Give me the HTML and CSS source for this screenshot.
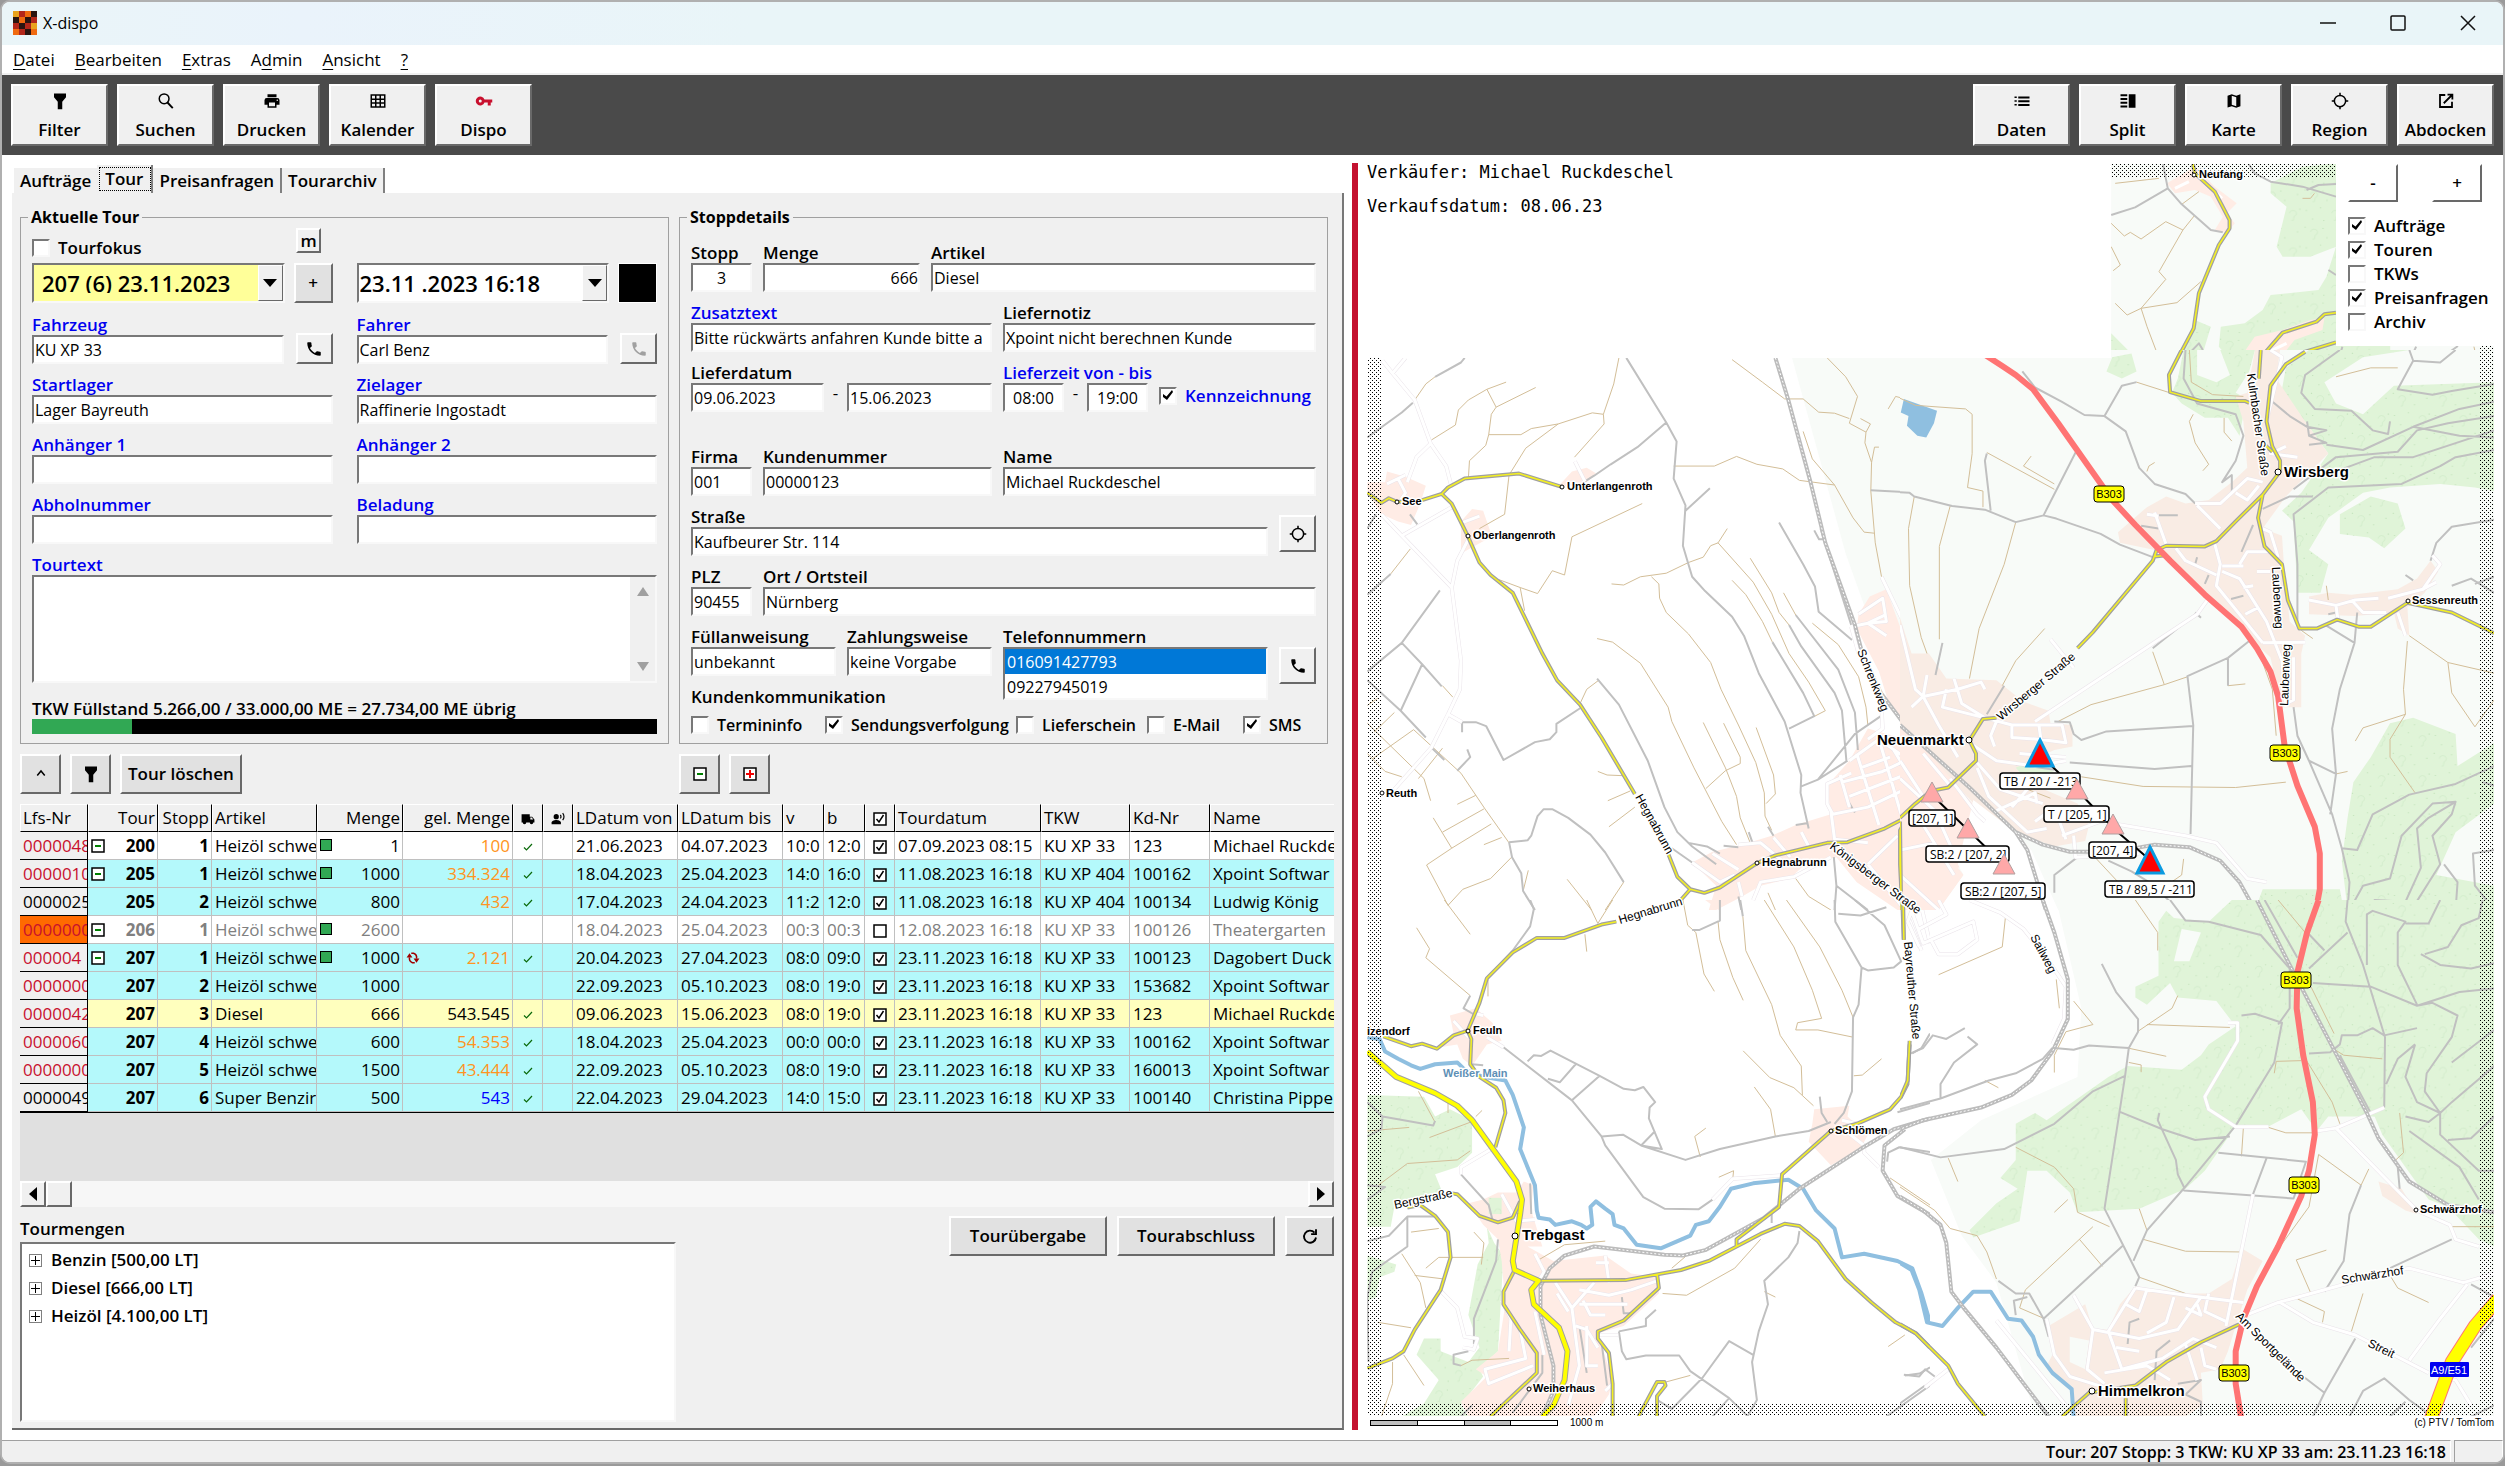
FILE: index.html
```html
<!DOCTYPE html>
<html lang="de">
<head>
  <meta charset="UTF-8" />
  <title>X-dispo</title>
  <meta name="viewport" content="width=device-width, initial-scale=1.0" />
  <link rel="stylesheet" href="styles.css">
</head>
<body>
  <!-- icon set -->
  <svg class="defs" width="0" height="0" aria-hidden="true">
    <symbol id="i-filter" viewBox="0 0 24 24"><path d="M4 2h16v5l-5 6v10H9V13L4 7z"/></symbol>
    <symbol id="i-search" viewBox="0 0 24 24"><g fill="none" stroke="currentColor" stroke-width="2"><circle cx="9.500" cy="9" r="6.500"/><path d="M14 14l7 7.500" stroke-width="2.500"/></g></symbol>
    <symbol id="i-print" viewBox="0 0 24 24"><path d="M18 3H6v4h12zM19 8H5a3 3 0 0 0-3 3v6h4v4h12v-4h4v-6a3 3 0 0 0-3-3zm-3 11H8v-5h8zm3-7a1 1 0 1 1 0-2 1 1 0 0 1 0 2z"/></symbol>
    <symbol id="i-grid" viewBox="0 0 24 24"><path fill="none" stroke="currentColor" stroke-width="2" d="M3 4h18v16H3zM3 9.500h18M3 14.500h18M9 4v16M15 4v16"/></symbol>
    <symbol id="i-key" viewBox="0 0 24 24"><path d="M12.650 10A6 6 0 1 0 12.650 14H17v4h4v-4h2v-4zM7 14a2 2 0 1 1 0-4 2 2 0 0 1 0 4z"/></symbol>
    <symbol id="i-list" viewBox="0 0 24 24"><path d="M2 6h3v2H2zm0 5h3v2H2zm0 5h3v2H2zM7 6h15v2.500H7zm0 5h15v2.500H7zm0 5h15v2.500H7z"/></symbol>
    <symbol id="i-split" viewBox="0 0 24 24"><path d="M13 3h9v18h-9zM2 3h9v2.500H2zm0 5h9v2.500H2zm0 5h9v2.500H2zm0 5h9V20.500H2z"/></symbol>
    <symbol id="i-map" viewBox="0 0 24 24"><path d="M20.500 3l-5.500 2-6-2-5.600 1.900v15.600L9 18.900l6 2.100 5.600-1.900V3zM15 19l-6-2.100V5l6 2.100z"/></symbol>
    <symbol id="i-target" viewBox="0 0 24 24"><g fill="none" stroke="currentColor" stroke-width="2"><circle cx="12" cy="12" r="7.500"/><path d="M12 1v4M12 19v4M1 12h4M19 12h4"/></g></symbol>
    <symbol id="i-open" viewBox="0 0 24 24"><path fill="none" stroke="currentColor" stroke-width="2.400" d="M11 4H4v16h16v-7M14 3.500h6.500V10M20 4L9 15"/></symbol>
    <symbol id="i-phone" viewBox="0 0 24 24"><path d="M6.600 10.800c1.400 2.800 3.800 5.100 6.600 6.600l2.200-2.200c.3-.3.700-.4 1-.2 1.100.4 2.300.6 3.600.6.600 0 1 .4 1 1V20c0 .6-.4 1-1 1C10.600 21 3 13.400 3 4c0-.6.400-1 1-1h3.500c.6 0 1 .4 1 1 0 1.300.2 2.500.6 3.600.1.300 0 .7-.2 1z"/></symbol>
    <symbol id="i-truck" viewBox="0 0 24 24"><path d="M1 4h14v4h4l4 5v5h-2a3 3 0 0 1-6 0H9a3 3 0 0 1-6 0H1zM16 9.500V13h5l-2.500-3.500z"/></symbol>
    <symbol id="i-voice" viewBox="0 0 24 24"><circle cx="9" cy="8" r="4.500"/><path d="M1 21v-3c0-3 5-4.500 8-4.500s8 1.500 8 4.500v3z"/><path fill="none" stroke="currentColor" stroke-width="2" d="M16 5c1.500 2 1.500 4 0 6M20 2c3 4 3 8 0 12"/></symbol>
    <symbol id="i-refresh" viewBox="0 0 24 24"><path fill="none" stroke="currentColor" stroke-width="2.500" d="M18 7.500A8 8 0 1 0 20 14M20 3v6.500h-6.500"/></symbol>
    <symbol id="i-sync" viewBox="0 0 24 24"><path fill="none" stroke="#a00000" stroke-width="2.600" d="M15 20h-4a8 8 0 0 1-5-9M9 4h4a8 8 0 0 1 5 9"/><path fill="#a00000" d="M1 11l5-7 5 7zM23 13l-5 7-5-7z"/></symbol>
    <symbol id="i-up" viewBox="0 0 24 24"><path fill="none" stroke="currentColor" stroke-width="2" d="M7 14l5-6 5 6"/></symbol>
    <symbol id="i-minus" viewBox="0 0 14 14"><path fill="#fff" stroke="#000" stroke-width="1.500" d="M1 1h12v12H1z"/><path fill="#008000" d="M4 6h6v2H4z"/></symbol>
    <symbol id="i-plus" viewBox="0 0 14 14"><path fill="#fff" stroke="#000" stroke-width="1.500" d="M1 1h12v12H1z"/><path fill="#f00000" d="M3 6h3V3h2v3h3v2H8v3H6V8H3z"/></symbol>
    <symbol id="i-box" viewBox="0 0 14 14"><path fill="#fff" stroke="#000" stroke-width="1.500" d="M1 1h12v12H1z"/></symbol>
    <symbol id="i-checked" viewBox="0 0 14 14"><path fill="#fff" stroke="#000" stroke-width="1.500" d="M1 1h12v12H1z"/><path fill="none" stroke="#000" stroke-width="1.500" d="M3.500 7l2.500 3 4.500-7"/></symbol>
    <symbol id="i-tick" viewBox="0 0 14 14"><path fill="none" stroke="#0a6a0a" stroke-width="1.200" d="M3 7.500l2.500 2.500L11 4"/></symbol>
    <symbol id="i-down" viewBox="0 0 14 8"><path d="M0 0h14L7 8z"/></symbol>
  </svg>

  <div class="window">
    <header class="titlebar">
      <svg class="logo" viewBox="0 0 24 24">
        <path fill="#e9a21c" d="M0 0h24v24H0z"/>
        <path fill="#b3261a" d="M6 0h6v6H6zM18 6h6v6h-6zM0 12h6v6H0zM12 12h6v6h-6zM6 18h6v6H6z"/>
        <path fill="#2a1410" d="M18 0h6v6h-6zM0 6h6v6H0zM12 6h6v6h-6zM6 12h6v6H6zM12 18h6v6h-6z"/>
        <path fill="#f06a10" d="M12 0h6v6h-6zM6 6h6v6H6zM18 18h6v6h-6zM0 18h6v6H0z"/>
      </svg>
      <h1>X-dispo</h1>
      <div class="window-buttons">
        <button type="button" aria-label="Minimieren"><svg viewBox="0 0 16 16"><path d="M0 8h16"/></svg></button>
        <button type="button" aria-label="Maximieren"><svg viewBox="0 0 16 16"><rect x="1" y="1" width="14" height="14" rx="1"/></svg></button>
        <button type="button" aria-label="Schließen"><svg viewBox="0 0 16 16"><path d="M1 1l14 14M15 1L1 15"/></svg></button>
      </div>
    </header>

    <nav class="menubar">
      <a href="#"><u>D</u>atei</a>
      <a href="#"><u>B</u>earbeiten</a>
      <a href="#"><u>E</u>xtras</a>
      <a href="#">A<u>d</u>min</a>
      <a href="#"><u>A</u>nsicht</a>
      <a href="#"><u>?</u></a>
    </nav>

    <div class="toolbar">
      <button type="button" class="btn tool"><svg><use href="#i-filter"/></svg>Filter</button>
      <button type="button" class="btn tool"><svg><use href="#i-search"/></svg>Suchen</button>
      <button type="button" class="btn tool"><svg><use href="#i-print"/></svg>Drucken</button>
      <button type="button" class="btn tool"><svg><use href="#i-grid"/></svg>Kalender</button>
      <button type="button" class="btn tool"><svg class="red"><use href="#i-key"/></svg>Dispo</button>
      <span class="spacer"></span>
      <button type="button" class="btn tool"><svg><use href="#i-list"/></svg>Daten</button>
      <button type="button" class="btn tool"><svg><use href="#i-split"/></svg>Split</button>
      <button type="button" class="btn tool"><svg><use href="#i-map"/></svg>Karte</button>
      <button type="button" class="btn tool"><svg><use href="#i-target"/></svg>Region</button>
      <button type="button" class="btn tool"><svg><use href="#i-open"/></svg>Abdocken</button>
    </div>

    <main class="content">
      <section class="data-pane">
        <div class="tabs">
          <button type="button" class="tab">Aufträge</button>
          <button type="button" class="tab active">Tour</button>
          <button type="button" class="tab">Preisanfragen</button>
          <button type="button" class="tab">Tourarchiv</button>
        </div>

        <div class="panel">
          <div class="forms">
            <fieldset class="group">
              <legend>Aktuelle Tour</legend>
              <div class="focus-row">
                <label class="check"><input type="checkbox">Tourfokus</label>
                <button type="button" class="btn btn-m">m</button>
              </div>
              <div class="pair combos">
                <div class="with-button">
                  <div class="combo yellow">
                    <select aria-label="Tour"><option>207 (6) 23.11.2023</option></select>
                    <span class="arrow"><svg><use href="#i-down"/></svg></span>
                  </div>
                  <button type="button" class="btn gray btn-add">+</button>
                </div>
                <div class="with-button">
                  <div class="combo">
                    <select aria-label="Tourdatum"><option>23.11 .2023 16:18</option></select>
                    <span class="arrow"><svg><use href="#i-down"/></svg></span>
                  </div>
                  <button type="button" class="color" aria-label="Farbe"></button>
                </div>
              </div>
              <div class="pair">
                <div class="with-button">
                  <div class="field link"><label for="fahrzeug">Fahrzeug</label><input id="fahrzeug" type="text" value="KU XP 33"></div>
                  <button type="button" class="btn btn-call" aria-label="Fahrzeug anrufen"><svg><use href="#i-phone"/></svg></button>
                </div>
                <div class="with-button">
                  <div class="field link"><label for="fahrer">Fahrer</label><input id="fahrer" type="text" value="Carl Benz"></div>
                  <button type="button" class="btn btn-call off" aria-label="Fahrer anrufen"><svg><use href="#i-phone"/></svg></button>
                </div>
              </div>
              <div class="pair">
                <div class="field link"><label for="start">Startlager</label><input id="start" type="text" value="Lager Bayreuth"></div>
                <div class="field link"><label for="ziel">Zielager</label><input id="ziel" type="text" value="Raffinerie Ingostadt"></div>
              </div>
              <div class="pair">
                <div class="field link"><label for="anh1">Anhänger 1</label><input id="anh1" type="text"></div>
                <div class="field link"><label for="anh2">Anhänger 2</label><input id="anh2" type="text"></div>
              </div>
              <div class="pair">
                <div class="field link"><label for="abhol">Abholnummer</label><input id="abhol" type="text"></div>
                <div class="field link"><label for="beladung">Beladung</label><input id="beladung" type="text"></div>
              </div>
              <div class="field link tourtext">
                <label for="tourtext">Tourtext</label>
                <textarea id="tourtext"></textarea>
                <span class="vscroll"><svg viewBox="0 0 12 9"><path d="M6 0l6 9H0z"/></svg><svg viewBox="0 0 12 9"><path d="M0 0h12L6 9z"/></svg></span>
              </div>
              <div class="fill-text">TKW Füllstand 5.266,00 / 33.000,00 ME = 27.734,00 ME übrig</div>
              <div class="fill-bar"><span style="width: 16%"></span></div>
            </fieldset>

            <fieldset class="group stopp">
              <legend>Stoppdetails</legend>
              <div class="row row-artikel">
                <div class="field"><label for="stopp">Stopp</label><input id="stopp" class="center" type="text" value="3"></div>
                <div class="field"><label for="menge">Menge</label><input id="menge" class="right" type="text" value="666"></div>
                <div class="field"><label for="artikel">Artikel</label><input id="artikel" type="text" value="Diesel"></div>
              </div>
              <div class="row row-half">
                <div class="field link"><label for="zusatz">Zusatztext</label><input id="zusatz" type="text" value="Bitte rückwärts anfahren Kunde bitte a"></div>
                <div class="field"><label for="notiz">Liefernotiz</label><input id="notiz" type="text" value="Xpoint nicht berechnen Kunde"></div>
              </div>
              <div class="row row-half row-dates">
                <div class="field">
                  <label for="ldvon">Lieferdatum</label>
                  <div class="range range-date"><input id="ldvon" type="text" value="09.06.2023"><span>-</span><input type="text" aria-label="Lieferdatum bis" value="15.06.2023"></div>
                </div>
                <div class="field link">
                  <label for="lzvon">Lieferzeit von - bis</label>
                  <div class="range range-time"><input id="lzvon" class="center" type="text" value="08:00"><span>-</span><input class="center" type="text" aria-label="Lieferzeit bis" value="19:00"><label class="check"><input type="checkbox" checked>Kennzeichnung</label></div>
                </div>
              </div>
              <div class="row row-kunde">
                <div class="field"><label for="firma">Firma</label><input id="firma" type="text" value="001"></div>
                <div class="field"><label for="kdnr">Kundenummer</label><input id="kdnr" type="text" value="00000123"></div>
                <div class="field"><label for="name">Name</label><input id="name" type="text" value="Michael Ruckdeschel"></div>
              </div>
              <div class="row row-strasse">
                <div class="field"><label for="strasse">Straße</label><input id="strasse" type="text" value="Kaufbeurer Str. 114"></div>
                <button type="button" class="btn btn-side" aria-label="Position"><svg><use href="#i-target"/></svg></button>
              </div>
              <div class="row row-ort">
                <div class="field"><label for="plz">PLZ</label><input id="plz" type="text" value="90455"></div>
                <div class="field"><label for="ort">Ort / Ortsteil</label><input id="ort" type="text" value="Nürnberg"></div>
              </div>
              <div class="row row-tel">
                <div class="tel-left">
                  <div class="row row-equal">
                    <div class="field"><label for="fuell">Füllanweisung</label><input id="fuell" type="text" value="unbekannt"></div>
                    <div class="field"><label for="zahl">Zahlungsweise</label><input id="zahl" type="text" value="keine Vorgabe"></div>
                  </div>
                  <div class="caption">Kundenkommunikation</div>
                </div>
                <div class="field"><label for="tel">Telefonnummern</label>
                  <select id="tel" class="listbox" size="2"><option selected>016091427793</option><option>09227945019</option></select>
                </div>
                <button type="button" class="btn btn-side low" aria-label="Anrufen"><svg><use href="#i-phone"/></svg></button>
              </div>
              <div class="comm">
                <label class="check"><input type="checkbox">Termininfo</label>
                <label class="check"><input type="checkbox" checked>Sendungsverfolgung</label>
                <label class="check"><input type="checkbox">Lieferschein</label>
                <label class="check"><input type="checkbox">E-Mail</label>
                <label class="check"><input type="checkbox" checked>SMS</label>
              </div>
            </fieldset>
          </div>

          <div class="forms actions">
            <div>
              <button type="button" class="btn gray square" aria-label="Einklappen"><svg><use href="#i-up"/></svg></button>
              <button type="button" class="btn gray square" aria-label="Filter"><svg><use href="#i-filter"/></svg></button>
              <button type="button" class="btn gray">Tour löschen</button>
            </div>
            <div>
              <button type="button" class="btn gray square" aria-label="Alle schließen"><svg class="small"><use href="#i-minus"/></svg></button>
              <button type="button" class="btn gray square" aria-label="Alle öffnen"><svg class="small"><use href="#i-plus"/></svg></button>
            </div>
          </div>

          <div class="table-area">
            <table class="stops">
              <colgroup><col class="c68"><col class="c70"><col class="c54"><col class="c105"><col class="c86"><col class="c110"><col class="c30"><col class="c30"><col class="c105"><col class="c105"><col class="c41"><col class="c41"><col class="c30"><col class="c146"><col class="c89"><col class="c80"><col></colgroup>
              <thead>
                <tr><th>Lfs-Nr</th><th class="r">Tour</th><th class="r">Stopp</th><th>Artikel</th><th class="r">Menge</th><th class="r">gel. Menge</th><th class="c"><svg><use href="#i-truck"/></svg></th><th class="c"><svg><use href="#i-voice"/></svg></th><th>LDatum von</th><th>LDatum bis</th><th>v</th><th>b</th><th class="c"><svg><use href="#i-checked"/></svg></th><th>Tourdatum</th><th>TKW</th><th>Kd-Nr</th><th>Name</th></tr>
              </thead>
              <tbody>
                <tr><th class="crimson">0000048</th><td class="tour"><svg><use href="#i-minus"/></svg>200</td><td class="tour">1</td><td>Heizöl schwe</td><td class="r"><i></i>1</td><td class="r orange">100</td><td class="c"><svg><use href="#i-tick"/></svg></td><td></td><td>21.06.2023</td><td>04.07.2023</td><td>10:0</td><td>12:0</td><td class="c"><svg><use href="#i-checked"/></svg></td><td>07.09.2023 08:15</td><td>KU XP 33</td><td>123</td><td>Michael Ruckde</td></tr>
                <tr class="cyan"><th class="crimson">0000010</th><td class="tour"><svg><use href="#i-minus"/></svg>205</td><td class="tour">1</td><td>Heizöl schwe</td><td class="r"><i></i>1000</td><td class="r orange">334.324</td><td class="c"><svg><use href="#i-tick"/></svg></td><td></td><td>18.04.2023</td><td>25.04.2023</td><td>14:0</td><td>16:0</td><td class="c"><svg><use href="#i-checked"/></svg></td><td>11.08.2023 16:18</td><td>KU XP 404</td><td>100162</td><td>Xpoint Softwar</td></tr>
                <tr class="cyan"><th>0000025</th><td class="tour">205</td><td class="tour">2</td><td>Heizöl schwe</td><td class="r">800</td><td class="r orange">432</td><td class="c"><svg><use href="#i-tick"/></svg></td><td></td><td>17.04.2023</td><td>24.04.2023</td><td>11:2</td><td>12:0</td><td class="c"><svg><use href="#i-checked"/></svg></td><td>11.08.2023 16:18</td><td>KU XP 404</td><td>100134</td><td>Ludwig König</td></tr>
                <tr class="dim"><th class="crimson alert">0000000</th><td class="tour"><svg><use href="#i-minus"/></svg>206</td><td class="tour">1</td><td>Heizöl schwe</td><td class="r"><i></i>2600</td><td></td><td></td><td></td><td>18.04.2023</td><td>25.04.2023</td><td>00:3</td><td>00:3</td><td class="c"><svg><use href="#i-box"/></svg></td><td>12.08.2023 16:18</td><td>KU XP 33</td><td>100126</td><td>Theatergarten</td></tr>
                <tr class="cyan"><th class="crimson">000004</th><td class="tour"><svg><use href="#i-minus"/></svg>207</td><td class="tour">1</td><td>Heizöl schwe</td><td class="r"><i></i>1000</td><td class="r orange"><svg class="sync"><use href="#i-sync"/></svg>2.121</td><td class="c"><svg><use href="#i-tick"/></svg></td><td></td><td>20.04.2023</td><td>27.04.2023</td><td>08:0</td><td>09:0</td><td class="c"><svg><use href="#i-checked"/></svg></td><td>23.11.2023 16:18</td><td>KU XP 33</td><td>100123</td><td>Dagobert Duck</td></tr>
                <tr class="cyan"><th class="crimson">0000000</th><td class="tour">207</td><td class="tour">2</td><td>Heizöl schwe</td><td class="r">1000</td><td></td><td></td><td></td><td>22.09.2023</td><td>05.10.2023</td><td>08:0</td><td>19:0</td><td class="c"><svg><use href="#i-checked"/></svg></td><td>23.11.2023 16:18</td><td>KU XP 33</td><td>153682</td><td>Xpoint Softwar</td></tr>
                <tr class="current"><th class="crimson">0000042</th><td class="tour">207</td><td class="tour">3</td><td>Diesel</td><td class="r">666</td><td class="r">543.545</td><td class="c"><svg><use href="#i-tick"/></svg></td><td></td><td>09.06.2023</td><td>15.06.2023</td><td>08:0</td><td>19:0</td><td class="c"><svg><use href="#i-checked"/></svg></td><td>23.11.2023 16:18</td><td>KU XP 33</td><td>123</td><td>Michael Ruckde</td></tr>
                <tr class="cyan"><th class="crimson">0000060</th><td class="tour">207</td><td class="tour">4</td><td>Heizöl schwe</td><td class="r">600</td><td class="r orange">54.353</td><td class="c"><svg><use href="#i-tick"/></svg></td><td></td><td>18.04.2023</td><td>25.04.2023</td><td>00:0</td><td>00:0</td><td class="c"><svg><use href="#i-checked"/></svg></td><td>23.11.2023 16:18</td><td>KU XP 33</td><td>100162</td><td>Xpoint Softwar</td></tr>
                <tr class="cyan"><th class="crimson">0000000</th><td class="tour">207</td><td class="tour">5</td><td>Heizöl schwe</td><td class="r">1500</td><td class="r orange">43.444</td><td class="c"><svg><use href="#i-tick"/></svg></td><td></td><td>22.09.2023</td><td>05.10.2023</td><td>08:0</td><td>19:0</td><td class="c"><svg><use href="#i-checked"/></svg></td><td>23.11.2023 16:18</td><td>KU XP 33</td><td>160013</td><td>Xpoint Softwar</td></tr>
                <tr class="cyan"><th>0000049</th><td class="tour">207</td><td class="tour">6</td><td>Super Benzir</td><td class="r">500</td><td class="r blue">543</td><td class="c"><svg><use href="#i-tick"/></svg></td><td></td><td>22.04.2023</td><td>29.04.2023</td><td>14:0</td><td>15:0</td><td class="c"><svg><use href="#i-checked"/></svg></td><td>23.11.2023 16:18</td><td>KU XP 33</td><td>100140</td><td>Christina Pippe</td></tr>
              </tbody>
            </table>
          </div>
          <div class="hscroll">
            <button type="button" class="btn" aria-label="Links"><svg viewBox="0 0 8 14"><path d="M8 0v14L0 7z"/></svg></button>
            <span class="btn thumb"></span>
            <span class="spacer"></span>
            <button type="button" class="btn" aria-label="Rechts"><svg viewBox="0 0 8 14"><path d="M0 0v14l8-7z"/></svg></button>
          </div>

          <div class="bottom">
            <div class="amounts">
              <div class="caption">Tourmengen</div>
              <ul class="tree">
                <li><span class="node"></span>Benzin [500,00 LT]</li>
                <li><span class="node"></span>Diesel [666,00 LT]</li>
                <li><span class="node"></span>Heizöl [4.100,00 LT]</li>
              </ul>
            </div>
            <div class="bottom-buttons">
              <button type="button" class="btn gray wide">Tourübergabe</button>
              <button type="button" class="btn gray wide">Tourabschluss</button>
              <button type="button" class="btn gray reload" aria-label="Aktualisieren"><svg><use href="#i-refresh"/></svg></button>
            </div>
          </div>
        </div>
      </section>

      <div class="splitter"></div>

      <section class="map-pane">
        <div class="map">
          <svg class="map-svg" viewBox="1367 164 1127 1252" preserveAspectRatio="xMinYMin slice">
            <defs>
              <pattern id="trees" width="106" height="112" patternUnits="userSpaceOnUse">
                <path class="tree-ground" d="M0 0h106v112H0z"/>
                <path class="tree-mark" d="M20 24a9 9 0 1 1 12 9l-2 12h-5M73 80a9 9 0 1 1 12 9l-2 12h-5"/>
                <path class="tree-dot" d="M5 8h3v3H5zM50 12h3v3h-3zM60 40h3v3h-3zM92 22h3v3h-3zM8 70h3v3H8zM44 62h3v3h-3zM24 96h3v3h-3zM98 66h3v3h-3zM52 100h3v3h-3z"/>
              </pattern>
              <pattern id="dots" width="4" height="4" patternUnits="userSpaceOnUse"><path d="M0 0h1v1H0zM2 2h1v1H2z"/></pattern>

              <path id="res-nw" d="M88,30L115,65 175,140 218,262 260,325 275,385M115,65L150,22M218,262L180,300 155,370M85,460L140,520 275,665M140,520L275,440M320,530L290,590 275,665 300,870 297,950 265,1020 220,1113 120,1230M265,1020L303,1042M608,312L635,368M130,360L150,400 130,430M100,375L150,350M300,485L350,465M925,1435L1000,1490 1040,1470M980,1410L1050,1455M1050,1385L1110,1380 1180,1440M1145,1365L1190,1420M1220,1350L1240,1390M1090,1540L1110,1490 1200,1475 1300,1420M1060,1530L1050,1490M1350,1150L1430,1090 1568,1190M1355,1185L1290,1215 1290,1270 1305,1300 1400,1280 1500,1230M1370,1130L1430,1330M1430,1090L1490,1300M1330,1210L1440,1180 1540,1130M1350,1250L1500,1190M1300,1290L1310,1370 1400,1380M1437,635L1500,770 1520,850M1355,775L1400,765 1450,740M1375,740L1440,695 1450,760 1400,765 1450,800M1520,850L1510,900 1568,990M1400,1440L1500,1568M1480,1360L1400,1440M1355,775L1375,850M1435,960L1440,1060 1400,1090M1325,1190L1350,1280M1470,1120L1540,1240M1380,1170L1460,1140"/>
              <path id="sec-nw" d="M47,400L85,428 105,415 127,425 180,425 248,403 265,385 310,360 457,346 572,383M248,403L275,430 318,520 350,595 380,630 440,680 520,850 560,925 622,993 680,1085 770,1243M860,1410L885,1475 920,1510 958,1520 1000,1505 1100,1437 1150,1415 1290,1380 1345,1378 1445,1340 1510,1305 1550,1250 1568,1240M920,1510L890,1545M1510,1305L1487,1345 1487,1440 1493,1568"/>
              <path id="rail-nw" d="M1150,22L1185,140 1245,370 1285,540 1365,770 1385,850 1435,960 1500,1050 1568,1120"/>

              <path id="res-ne" d="M660,455L675,500 690,545M640,460L670,465M715,555L740,590 820,630M815,540L830,600 820,660 940,820M835,620L880,640 950,760 990,870 1000,1000M765,430L830,430 900,360 940,370M770,435L830,500M880,600L900,565 960,565M835,605L890,605M925,620L960,620M940,820L1050,818M930,720L895,740M890,665L915,660M1020,860L1020,980 1000,990M940,500L960,510 980,580M960,0L990,20 950,200M1000,270L960,290 1030,300M930,380L900,420 870,400M1060,700L1130,715 1180,700 1240,695M1130,715L1135,755M1170,700L1200,735 1260,735M1380,575L1400,600 1355,670 1265,695M1355,670L1390,650M1290,735L1310,800M800,695L770,740 350,1040M390,810L450,890M0,770L40,950 60,970 150,950 210,930 220,950M60,970L100,1050 150,1140M70,910L60,970 30,1000M120,950L110,1000 220,1030 290,1050 420,1050 430,1100 360,1090 290,1085 290,1050M360,1050L365,1090M250,1040L235,1080 245,1110M140,920L160,990 220,1030M180,1100L250,1150 350,1165 430,1150M310,1130L430,1140M195,1150L260,1230 370,1270M250,1290L350,1240 355,1270M200,1170L230,1250 330,1350 380,1340M290,1280L330,1230M350,1320L400,1280 430,1370M420,1360L520,1320 740,1360 820,1380 900,1480 950,1490M450,1360L455,1420 620,1410M0,1150L60,1250M0,1200L90,1290 140,1410M60,1330L140,1470M0,1400L90,1380M0,1470L100,1568M130,1200L200,1300 220,1320M60,1130L130,1220"/>
              <path id="sec-ne" d="M0,1310L40,1270 80,1235 125,1225 197,1150 197,1130 180,1093 215,1033 250,1030M460,835L500,790 655,590 665,560 690,548 790,550 820,535 870,480 940,405 985,340 985,310 965,270 950,200 960,100 1000,40 1050,5M965,285L940,260M730,0L697,70 700,118 780,143 895,143 905,148M940,405L928,470 945,550 990,600 1005,700 1035,780 1080,780 1133,755 1190,775 1220,775 1315,708 1430,735 1540,793M935,0L930,80M0,1320L3,1568M665,560L660,578 690,575"/>
              <path id="rail-ne" d="M0,1050L180,1225 300,1350 370,1385 440,1405 560,1405 660,1385 750,1392 830,1430 880,1490 920,1568M300,1350L330,1400 350,1470 378,1568"/>

              <path id="res-sw" d="M370,380L415,408M280,335L320,380M340,315L360,320M390,685L300,740 300,760M245,1083L290,1130 310,1210 345,1215 335,1245 305,1240M980,830L1035,772 1168,763M1370,620L1330,610M1340,640L1390,680 1390,700 1430,740M410,815L450,890 500,885M500,980L525,1030 510,1055M410,1110L435,1160 430,1250M500,1140L525,1260M460,1190L475,1270 365,1300 375,1340 495,1290M555,1060L600,1130 620,1290 590,1400M560,1090L590,1140M600,1130L660,1060M620,1080L700,1095 760,1080 830,1055M620,1120L750,1120M630,1110L650,1150 690,1150M640,1180L640,1290 670,1290M690,985L700,1060M665,1005L700,1005M610,1180L640,1190 670,1240M670,1205L725,1205M690,1360L710,1340M1510,50L1545,140M1545,20L1568,120"/>
              <path id="sec-sw" d="M720,60L680,68 580,105 505,105 440,145 370,217 350,285 318,362 280,375 235,412 195,398 165,405 90,378M318,362L328,385 325,455 350,490 395,520 415,555 420,590 393,685M155,852L190,845 230,875 265,920 272,990 245,1080 175,1190 145,1250 115,1270 47,1297M270,812L290,815 350,875 400,893 440,880 460,835M445,1025L415,1085 415,1120 460,1190 505,1255 505,1310 380,1431M510,1055L745,1053 895,1025 970,1000 1045,960 1110,925 1175,897 1215,903 1265,945 1340,1050 1410,1115 1475,1170 1530,1200 1568,1240M1045,960L1045,940 1160,850 1168,760 1300,640 1370,620 1460,580 1490,545 1507,510 1513,400M1493,0L1497,110M830,1035L835,1075 740,1165 670,1195 670,1215 700,1255 710,1340 710,1431M780,1431L830,1335 850,1335 853,1345 830,1375 830,1431"/>
              <path id="rail-sw" d="M1568,605L1470,635 1380,690 1215,800 1120,880 960,970 900,985 850,983 660,960 580,985 540,1020 515,1070 515,1150 550,1290 550,1360 520,1431M1500,635L1445,680 1440,750 1480,820 1568,872"/>
              <path id="main-sw" d="M47,420L125,490 230,535 290,570 330,610 450,780 465,830 460,870 440,1000 445,1025 510,1055 490,1080 497,1120 565,1185 588,1250 580,1330 550,1400 520,1431"/>

              <path id="res-se" d="M180,0L260,35 320,80 380,160 430,240 425,330 395,400M30,30L60,120 190,60 200,110 150,150 100,150 80,110M40,0L20,60 50,130M100,0L120,40 50,80M850,340L875,340 875,390 790,545 800,580 870,628 955,628M1080,640L1130,632 1255,575M1130,632L1340,860 1425,900 1440,940 1500,960M915,815L845,1180M885,1155L980,1115 1270,1030 1320,1020 1460,1060 1540,1035M985,1115L1070,1170 1180,1205 1370,1310M1470,1065L1400,1160 1320,1275M1400,1320L1440,1330 1480,1400M450,1095L500,1190 485,1300 530,1340M610,1075L540,1195 575,1300M610,1075L740,1095 890,1115M500,1190L620,1215 720,1190 780,1100M710,1100L690,1170 640,1200M640,1080L620,1140 585,1120M575,1300L680,1270 760,1215 820,1240M560,1240L620,1250M530,1310L640,1290 700,1330M740,1230L770,1330M780,1240L790,1290 820,1300M380,1160L400,1260 440,1320 530,1350M250,1165L430,1400M740,1130L780,1150 770,1120M800,1090L790,1140 850,1170M125,1300L65,1350"/>
              <path id="sec-se" d="M8,0L10,110M25,390L20,500 0,550M0,1175L40,1200 125,1290 150,1340 220,1431M420,1431L490,1365 610,1345 690,1280 780,1225 880,1175M585,1380L585,1431"/>
              <path id="rail-se" d="M370,0L400,90 435,220 435,330 395,420 340,500 290,540 210,575 60,610 0,635M0,822L60,860 105,900 120,950 133,1085 165,1130 250,1240 385,1431M925,0L1010,180 1210,590 1240,660 1320,780 1420,845 1540,865"/>
              <path id="a9" d="M1550,1105L1490,1180 1430,1280 1375,1440"/>
              <path id="sec-n" d="M785,492L790,520 840,575 877,660 877,685 850,735 800,880 787,985 745,1080M950,1080L1010,998 1095,965 1115,943 1144,938M1020,1080L1040,1065 1144,1027"/>
            </defs>

            <!-- north west -->
            <svg x="1350" y="350" width="580" height="560" viewBox="0 0 1568 1568" preserveAspectRatio="none">
              <path class="land" d="M1195,22L1568,22 1568,850 1520,850 1390,715 1340,570z"/>
              <path class="town" d="M47,370L95,370 100,340 150,355 205,380 190,430 165,490 130,480 85,460 47,400zM300,480L330,445 360,450 380,510 370,530 300,570zM560,385L600,340 640,330 665,345 640,370zM925,1435L980,1405 1060,1385 1140,1360 1205,1330 1300,1300 1290,1220 1350,1150 1400,1060 1500,1090 1568,1130 1568,1568 1480,1568 1370,1490 1315,1420 1230,1440 1190,1480 1110,1500 1060,1530 990,1568 970,1568 990,1500zM1405,690L1450,670 1510,840 1560,850 1568,900 1568,1120 1460,1000 1430,900 1370,780 1375,740z"/>
              <path class="water" d="M1498,137L1568,155 1568,235 1555,245 1530,238 1505,210 1510,185 1488,175z"/>
              <path class="track" d="M175,140L205,95 230,75M220,252L285,210 293,168 320,140 370,110 422,90M370,110L395,160 502,105M395,160L382,180 375,237 462,237 490,220 563,207 655,176 685,180 713,95 727,22M375,237L367,267 323,310 320,360M563,207L475,275 430,350 418,460 350,500M685,180L687,207 607,300M875,325L985,325 1045,298 1100,320 1170,333 1215,365 1310,378M1033,27L1115,90 1175,137 1225,137 1267,174 1310,177 1350,192M1290,22L1340,75 1372,130 1350,205 1395,230 1392,260 1410,315 1408,395 1420,540 1437,635M1225,228L1250,305 1310,378 1360,470 1390,510 1418,513M1455,165L1475,130 1568,155M1430,272L1418,272 1410,315M1380,192L1407,207 1395,230M1525,410L1508,500 1515,660 1545,770 1560,850M790,430L600,523 580,630 547,618 507,682 460,665 400,642M460,665L472,730M707,655L740,658 785,635 855,625 915,595 955,580 975,548 995,540 1020,500M995,540L1090,650 1140,740 1187,850 1240,930 1285,1010 1257,1025M1082,583L1140,680 1160,735 1187,770M1033,645L1070,685 1115,760 1142,818M1172,680L1205,742M1250,765L1320,825 1375,915 1395,1000 1400,1050M815,635L835,655 837,695 855,735 915,795 975,875 1003,950 1050,1050 1097,1155 1120,1240 1122,1305 1140,1345M668,808L710,818 785,877 860,1000 870,1040 930,1170 1005,1320 1045,1385M955,1043L1015,1170 1045,1250 1055,1310 1082,1380M1010,1045L1055,1140 1055,1158 1015,1178 962,1228M1098,1057L1145,1190 1150,1243 1125,1270M163,557L110,627M622,990L640,950 672,925M172,1063L300,1185 365,1285 430,1380M172,1063L60,1145M47,1045L200,1200 218,1262M120,1015L65,1070M290,1272L340,1247M250,1350L362,1285M225,1310L275,1395 382,1327M275,1395L207,1442 265,1555 305,1510 380,1480 437,1420M362,1385L410,1365M670,1180L695,1190 740,1192M697,1262L757,1235M700,1335L770,1280M587,1482L653,1568M740,1490L690,1568M250,940L278,972M482,1457L468,1515M47,995L75,975M250,1115L185,1200M47,1130L95,1180 140,1195M1205,1480L1240,1530 1300,1568M1130,1520L1150,1568"/>
              <path class="road" d="M47,245L140,175 170,148M230,75L300,35 310,22M747,22L855,203 883,256 875,360 907,435 900,548 925,635 960,675 1033,747 1065,800 1105,905 1175,1040 1220,1190 1218,1240 1240,1340M855,203L777,272 705,320 660,352 635,368M907,450L973,387M1160,483L1225,600 1257,662 1267,733 1357,812M1187,770L1220,830 1310,960 1330,1010 1342,1150M1205,742L1320,895 1365,1015 1373,1120M1142,818L1225,960 1255,1025 1187,1060M668,920L727,993 805,1150 850,1280 885,1350 925,1390 990,1440M622,1003L558,1047 558,1070 540,1090 500,1098 415,1148 368,1053 340,1042 303,1042 303,1070M430,1378L480,1373 490,1360 507,1305 523,1286 548,1286 590,1310 650,1357 690,1407 740,1490M430,1378L438,1420 463,1465 468,1515 500,1568M243,673L140,820 47,900M140,820L195,880 248,942M195,880L137,1010M47,925L137,1010 205,1085M220,1113L255,1148M290,1178L325,1140 317,1118M47,685L110,627M1220,1222L1265,1203 1365,1075 1435,1025M1265,1203L1345,1150M47,500L70,460M162,460L182,488M1308,1420L1315,1500 1310,1568M1315,1500L1400,1568M1408,393L1510,398 1525,410 1568,420M1255,505L1268,530 1282,530M1272,500L1355,770M1130,1335L1145,1360M1205,1330L1235,1325M1078,1350L1090,1385M915,1380L965,1390 1000,1410M1010,1388L1050,1392M870,1395L925,1435M1345,1260L1365,1295M1050,1530L1058,1568"/>
              <use href="#res-nw" class="res-case"/><use href="#res-nw" class="res-fill"/>
              <use href="#rail-nw" class="rail-case"/><use href="#rail-nw" class="rail-fill"/>
              <use href="#sec-nw" class="sec-case"/><use href="#sec-nw" class="sec-fill"/>
            </svg>

            <!-- south west -->
            <svg x="1350" y="900" width="580" height="566" viewBox="0 0 1568 1568" preserveAspectRatio="none">
              <path class="forest" d="M47,540L200,545 230,600 270,580 330,610 330,700 290,740 230,760 250,810 120,850 110,905 47,905zM47,985L125,1010 120,1030 80,1045 70,1100 47,1110zM370,905L390,950 415,985 400,1250 350,1300 360,1320 300,1400 320,1431 140,1431 200,1395 240,1330 180,1260 200,1215 245,1215 245,1250 320,1280 350,1240 320,1150 345,1010 375,950z"/>
              <path class="town" d="M270,320L340,300 385,340 410,390 370,400 350,430 330,460 305,440 290,400 230,410 280,370zM320,840L360,830 400,810 450,810 470,780 495,790 490,860 520,960 480,960 550,1000 690,985 760,1035 835,1045 835,1090 740,1180 670,1200 710,1330 700,1370 660,1431 320,1431 300,1390 370,1320 340,1300 400,1250 420,1120 410,1000 400,940 360,900zM1255,580L1350,570 1345,600 1400,650 1380,690 1300,735 1240,670 1250,620zM960,0L1000,0 1000,30z"/>
              <path class="forest" d="M375,825L410,825 410,870 375,870z"/>
              <path class="river" d="M47,380L80,385 95,420 130,440 165,458 190,468 230,455 290,450 310,470 360,490 420,500 440,540 470,630 460,690 500,790 505,860 510,880 540,885 555,900 600,890 625,900 640,910 655,900 650,850 665,835 690,855 710,870 715,900 740,910 775,955 840,965 920,930 935,900 970,890 1000,850 1030,800 1090,785 1185,775 1225,800 1260,860 1310,910 1330,990 1390,980 1480,1000 1520,1020 1545,1090 1568,1170"/>
              <path class="track" d="M640,0L670,65 710,0M635,95L640,143M255,0L325,95M180,77L215,135 205,160 325,265M373,217L373,267M900,0L913,70 935,90 957,205 985,253M995,60L1000,110 1035,215 1063,278M1062,45L1070,140 1140,290 1163,375 1220,460 1223,540M1120,0L1200,130 1250,250 1275,328 1210,340 1205,360 1265,360 1360,380M1180,0L1270,130 1330,250 1360,325M1063,418L1135,492 1200,520 1253,570M1093,518L1137,580 1150,655M1362,487L1385,485 1437,440M962,632L932,655 947,712M997,768L1037,750 1035,770M185,530L228,612M265,590L265,560M357,583L340,600M215,658L340,610M77,790L155,730 290,720 325,695M140,980L190,1060 205,1130M165,920L240,910M175,1040L255,1050M205,1020L240,990 360,990M335,920L362,950 355,1010M505,1000L580,955 690,945M870,1020L910,985M1110,940L1040,1020 910,1095 845,1090M1120,1085L1150,1100M85,1431L115,1340 115,1280M145,1260L200,1345M75,1170L165,1185M855,1335L920,1317M1455,1237L1500,1205M300,1290L330,1275 430,1270M1568,845L1460,770M47,640L160,630"/>
              <path class="road" d="M487,0L497,25 487,73 440,140 370,217M325,265L307,300 340,320M415,408L600,555 680,655 690,680 793,823 850,855 942,857 980,830M480,447L497,430 517,432 542,417 675,487 740,523 770,527 793,518 825,560 810,575 808,605 843,690 787,680M610,455L567,505 535,495M675,487L600,555M680,655L738,650 787,680 907,720 1000,690 1150,655 1240,640 1300,615M787,680L825,640M1310,0L1312,60 1383,187 1375,290 1360,325 1357,530 1335,590 1310,620M1383,187L1400,195 1470,187 1490,170 1445,70 1365,0M1320,38L1380,43 1450,20M925,83L945,83 1000,57 1000,0M1055,0L1062,45M1270,545L1275,590 1290,615M1480,588L1568,562M1568,370L1545,410 1520,425M1452,725L1455,700 1485,685 1568,698M300,760L375,845 385,885M47,560L88,600 225,625 230,612M88,600L85,635 47,655M47,830L95,795 47,790M235,877L155,877 105,930 47,945M155,877L155,960 60,1030 47,1100 50,1280M400,940L395,1000 335,1160 335,1230M320,1250L280,1260 280,1285 300,1290M1215,917L1210,950 1185,990 1120,1055 1130,1120 1105,1195 1087,1280 1100,1385 1075,1430M727,1195L800,1180 800,1160 827,1135M727,1195L735,1250 747,1272 800,1262 890,1262 920,1305 1025,1380 1075,1430M952,1325L1025,1222 1090,1260M952,1325L870,1410 830,1385M1025,1380L980,1431M620,1180L640,1310M680,1225L695,1345M735,1100L740,1145 760,1145M487,785L490,870M1500,1317L1540,1312 1568,1295M1568,1345L1450,1431M520,1260L520,1310 440,1420M1140,870L1140,895M300,1431L330,1400M330,455L360,458"/>
              <use href="#res-sw" class="res-case"/><use href="#res-sw" class="res-fill"/>
              <use href="#rail-sw" class="rail-case"/><use href="#rail-sw" class="rail-fill"/>
              <use href="#sec-sw" class="sec-case"/><use href="#sec-sw" class="sec-fill"/>
              <use href="#main-sw" class="main-case"/><use href="#main-sw" class="main-fill"/>
            </svg>

            <!-- north -->
            <svg x="1880" y="0" width="625" height="360" viewBox="0 0 1568 1080" preserveAspectRatio="none">
              <path class="land" d="M580,492H1540V1080H580z"/>
              <path class="forest" d="M980,550L1060,500 1144,490 1144,740 1080,770 1010,770 995,740 1020,620 980,580zM1144,740L1120,830 1100,870 980,885 960,930 915,970 855,980 850,1040 880,1080 1280,1080 1280,1000 1144,920zM790,960L830,980 810,1060 740,1080 780,990zM580,1000L630,1060 620,1080 580,1080z"/>
              <path class="town" d="M720,550L790,500 840,560 895,610 870,640 890,670 870,700 840,690 860,650 830,590 790,570 740,580zM900,1080L940,1010 1010,990 1080,960 1115,955 1110,990 1040,1020 1000,1080z"/>
              <path class="track" d="M590,550L700,535M790,645L760,690 717,665 655,717 628,697 613,708 580,670M760,690L700,815 717,838 655,925 620,945 590,910M805,845L745,908 655,925 670,980 700,1075M580,740L603,795 585,812M800,575L757,613M1060,595L1080,595 1090,580M1490,1040L1498,1080"/>
              <path class="road" d="M710,492L722,565 640,622 580,645M722,565L757,613 830,690 860,697M925,492L940,520 980,545 1060,560 1144,590M1070,570L1100,555 1144,552M760,1080L800,1030 810,1050M1125,810L1144,825M1150,1080L1160,1040M1330,1080L1345,1040M1400,1080L1450,1038"/>
              <path class="res-fill" d="M740,565L775,545M840,575L858,595M810,1060L825,1070M950,1070L1020,1030"/>
              <use href="#sec-n" class="sec-case"/><use href="#sec-n" class="sec-fill"/>
            </svg>

            <!-- north east -->
            <svg x="1900" y="350" width="605" height="560" viewBox="0 0 1568 1568" preserveAspectRatio="none">
              <path class="land" d="M0,22H547V0H1540V1568H0z"/>
              <path class="forest" d="M550,20L600,10 613,60 575,80 535,60zM735,0L770,0 770,70 820,90 855,70 830,0 920,0 905,60 870,120 905,140 890,180 880,240 850,190 790,190 730,150 705,120 720,80zM1000,50L1060,0 1320,0 1200,20 1100,90 1130,150 1200,180 1280,100 1540,90 1540,395 1490,385 1400,375 1270,385 1200,400 1110,470 1060,560 1110,600 1090,680 1030,680 1020,480 990,450 1040,400 1110,290 1050,200 985,140zM1140,460L1220,410 1290,430 1310,500 1255,555 1215,525 1140,515zM1270,1045L1330,1030 1440,1075 1445,1165 1540,1100 1540,1270 1440,1350 1390,1470 1540,1500 1540,1568 1160,1568 1145,1430 1160,1310 1175,1210 1220,1140zM940,1510L1140,1510 1150,1568 920,1568zM295,1165L350,1160 400,1180 320,1195z"/>
              <path class="town warm" d="M920,0L985,0 975,80 1050,200 1110,290 1000,410 940,500 990,520 995,600 1010,760 1050,800 1040,850 1040,1000 990,1000 960,860 900,800 800,690 700,580 660,560 570,540 565,510 640,440 690,410 740,430 800,420 860,370 900,330 890,200 870,130 900,120zM1060,690L1110,680 1170,685 1290,670 1340,640 1375,590 1395,620 1360,680 1315,720 1320,800 1290,780 1280,735 1180,745 1060,740zM0,750L30,850 75,850 120,920 250,925 320,985 385,1010 390,1045 447,1050 447,1110 400,1120 300,1170 330,1210 460,1270 490,1330 480,1375 400,1390 300,1350 200,1280 130,1200 0,1060z"/>
              <path class="town" d="M0,1060L60,1110 180,1260 240,1330 300,1350 340,1400 150,1450 165,1470 100,1568 0,1568z"/>
              <path class="blank" d="M190,1260L300,1350 340,1400 410,1568 100,1568 165,1470 150,1440z"/>
              <path class="water" d="M10,137L96,170 88,205 68,245 45,240 18,212 22,185 2,175z"/>
              <path class="track" d="M0,135L40,155 170,165 187,180 187,290 175,385 215,395 215,440M225,287L400,390M400,375L320,325 340,297M37,410L22,500 25,660 55,805 70,850M130,437L102,550 102,810M300,482L270,600 205,780 180,920M375,780L300,870 265,940M655,845L685,937 495,993 410,1040M685,937L745,915M470,1195L630,1222 870,1225 1000,1210M760,180L750,200 765,260 800,320 785,338M840,190L840,230 860,255M613,90L700,120M640,340L645,325 660,315M935,860L965,950 975,1080M850,940L895,935M1315,815L1305,950 1310,1020 1200,1058 1180,1095M1310,1020L1270,1090 1270,1140 1335,1240M1320,800L1420,875 1540,905M1420,875L1430,960 1490,1055 1540,980M735,1425L730,1470 690,1500M1130,75L1220,50 1290,50M505,1420L600,1530M1105,660L1110,700M1040,785L1070,808M1130,1187L1160,1180M330,1230L390,1255M750,0L755,90 810,125 890,130"/>
              <path class="road" d="M317,60L350,105 420,145 478,182 530,185 585,228 620,330 660,375 740,403 765,430M530,185L575,100 613,90M455,287L372,463M0,398L25,400 37,410 135,437 220,447 300,482 372,463 405,472 520,515 570,545 655,580M225,290L220,310 235,450M905,815L850,862 745,913 760,1050 753,1355M850,862L850,940M765,740L655,835M765,735L780,750M400,1040L440,1042 450,1075 470,1092 535,1068 760,1053M440,1155L660,1173 755,1165M300,1160L400,1175M110,820L92,910M270,940L225,1020M1020,1000L1030,1080 1060,1150 1120,1300 1145,1395 1165,1490 1160,1568M1060,1150L1130,1187M1105,772L1178,820 1140,950 1120,1060 1130,1187 1115,1300M1185,735L1178,820M940,445L1010,410 1070,410M740,0L735,80 770,150 870,180 890,240 870,310 835,370 860,350 860,400M1140,0L1050,70 1040,120 1075,165 1170,170 1225,225 1265,235 1270,200M1540,145L1450,165 1330,215 1200,280 1105,265M1540,185L1420,205 1340,225 1290,285 1130,300 1020,390M1540,245L1450,240 1330,215M1540,225L1330,300 1230,300 1130,340M1540,280L1440,300 1400,325 1300,375 1110,385 1020,460 1030,600 1030,770M1540,95L1430,115 1380,125 1290,110 1330,30 1320,0M1330,30L1400,35 1440,0M960,140L1010,185 1055,215 1105,225 1060,240 1105,260 1060,265M1055,200L1060,240M1540,475L1430,495 1390,540 1375,590M1540,1165L1440,1215 1320,1245 1225,1300 1185,1400 1145,1395M1540,1220L1510,1210M1225,1568L1230,1540 1310,1545 1350,1450 1340,1340 1370,1310 1440,1265 1430,1300 1380,1360 1400,1440 1330,1560M1165,1568L1200,1500 1270,1480 1300,1360 1380,1270 1440,1265M1540,1400L1485,1410 1490,1500 1540,1568M1410,1440L1445,1490 1440,1568M400,1520L400,1470 460,1420M540,1430L600,1460 660,1500 720,1568M670,463L720,463M625,492L670,500M858,697L890,688M790,655L800,630M765,600L770,580M915,490L885,565M1430,660L1480,640 1540,680M1540,635L1490,655M1310,630L1330,645M1110,740L1130,735"/>
              <use href="#res-ne" class="res-case"/><use href="#res-ne" class="res-fill"/>
              <use href="#rail-ne" class="rail-case"/><use href="#rail-ne" class="rail-fill"/>
              <use href="#sec-ne" class="sec-case"/><use href="#sec-ne" class="sec-fill"/>
              <path class="trunk" d="M215,10L265,45 300,70 345,110 410,205 550,420 610,490 700,590 790,685 885,775 925,835 960,900 980,970 997,1110 1030,1220 1075,1335 1088,1410 1088,1510 1078,1568"/>
            </svg>

            <!-- south east -->
            <svg x="1900" y="900" width="605" height="566" viewBox="0 0 1568 1568" preserveAspectRatio="none">
              <path class="land" d="M405,0L1540,0 1540,1431 350,1431 250,1060 160,930 80,720 210,610 460,490 470,300z"/>
              <path class="forest" d="M670,60L690,30 710,50 800,60 860,0 1540,0 1540,960 1500,940 1420,850 1370,830 1250,650 1230,600 1110,600 1080,640 1040,580 950,630 870,625 855,650 790,750 740,800 620,855 460,865 440,810 380,750 330,750 310,890 190,935 180,915 250,840 305,800 260,770 300,720 300,620 350,590 380,610 540,490 590,460 730,470 780,430 800,400 870,350 820,280 720,270 700,230 640,290 610,270 610,240 670,210z"/>
              <path class="land" d="M730,80L780,90 750,170 710,170z"/>
              <path class="town warm" d="M385,1180L480,1120 500,1190 540,1190 570,1120 610,1070 740,1090 800,1090 860,1050 885,965 940,1000 900,1080 870,1180 850,1250 830,1300 780,1310 785,1400 740,1431 450,1431 450,1360 380,1290 400,1250zM1240,780L1300,800 1340,870 1310,860 1250,820z"/>
              <path class="land" d="M440,1210L490,1220 480,1300 440,1280z"/>
              <path class="river" d="M0,1005L30,1025 50,1080 70,1170 110,1180 150,1130 190,1085 235,1085 280,1160 315,1165 345,1210 360,1260 395,1310 445,1355 450,1431"/>
              <path class="track" d="M273,50L265,130 100,207M405,220L413,300M450,280L500,345 430,365 400,430 400,478M720,265L705,300 615,365M640,345L770,350 855,353M590,410L690,433M593,450L625,457 625,477M610,0L668,90 668,140M980,0L1050,90M1065,240L1125,370M1045,430L1120,560 1140,620M1120,410L1150,430 1250,440M970,480L975,447 1040,445M300,685L400,740 450,800 460,865 543,905M500,905L325,1080M465,940L525,1015M630,940L740,973 880,975M620,1045L740,1090M890,630L885,710M955,630L1000,645 1070,645M1085,705L1195,790 1215,745M1085,705L1060,850 985,960M0,795L90,860 130,910 200,930 225,975 250,1050M125,715L150,780M220,500L255,520M1105,970L1027,997 1065,1090M1200,1090L1170,1195M1030,1105L1100,1140 1095,1170M1270,1040L1290,1075 1370,1115M620,855L640,915M1295,590L1305,700 1285,720M1430,905L1480,905 1540,905M400,865L435,830M325,1080L310,1130 375,1160"/>
              <path class="road" d="M0,580L105,550 230,500 300,480 370,440 395,410M105,550L105,510 140,450 200,400 175,378M28,425L60,410 85,375 120,385 168,355M523,177L560,255 617,330 617,365 593,410 583,490 530,855 580,960 620,1045 610,1070M400,410L450,415 490,403 593,410M0,685L105,713 270,690 400,620 500,530 583,487M570,587L680,635 765,665 855,655M672,590L668,610 715,720 720,760 738,800M700,0L740,57 800,60 935,97 1010,190 1010,300 980,345M885,320L920,315 990,340 970,450 870,625 735,800 640,915 605,1000M735,805L1020,827 1052,725 825,700M950,715L915,815M945,0L1030,160M1060,425L1115,422 1140,400 1145,375 1185,375 1225,355 1255,375 1340,355M1070,230L1220,240 1340,293 1380,285 1445,320 1430,380 1365,480 1360,530 1400,590 1400,650 1500,750 1540,750M1160,0L1155,60 1200,180 1220,250 1257,380 1255,575M1060,190L1160,90M1060,95L1100,140M1210,180L1210,40 1225,30 1310,60 1290,90 1290,180 1340,290M1540,245L1450,255 1340,293M1310,65L1370,65 1400,0M1360,150L1420,130 1455,70 1500,50 1510,0M1350,150L1400,180 1480,190 1540,175M1335,400L1290,440 1260,510M1335,400L1310,490 1340,560 1400,590M1310,600L1370,615 1400,590M1540,460L1430,560 1400,590M1430,450L1540,360M1540,600L1480,660 1420,665M1320,640L1450,740 1500,830M1140,430L1220,590M1195,790L1165,870 1150,1000 1100,1085M1270,1020L1430,940M1180,1215L1100,1365 1045,1320M1100,1365L1070,1431M1165,1431L1200,1360 1255,1325 1320,1385 1380,1431M1270,1431L1310,1390M1480,1065L1540,1100M1540,1160L1480,1240M372,1160L580,955M372,1160L335,1090 300,1090 255,1055M300,1150L295,1110 330,1100M0,1395L65,1345M90,1320L65,1300 50,1320 10,1315M1290,740L1295,800M590,1230L595,1170 620,1160M660,1330L665,1250 700,1220M720,1340L780,1330 740,1370 780,1390 780,1431M1540,1400L1480,1431M372,1160L385,1210"/>
              <use href="#res-se" class="res-case"/><use href="#res-se" class="res-fill"/>
              <use href="#rail-se" class="rail-case"/><use href="#rail-se" class="rail-fill"/>
              <use href="#sec-se" class="sec-case"/><use href="#sec-se" class="sec-fill"/>
              <path class="trunk" d="M1085,0L1055,90 1030,200 1028,300 1045,430 1070,560 1075,650 1060,750 1040,820 980,960 925,1070 890,1160 870,1250 870,1340 885,1440"/>
              <use href="#a9" class="a9-case"/><use href="#a9" class="a9-fill"/>
            </svg>

            <path class="frame" d="M1367 164h1127v1252h-1127zM1382 178v1225h1097V178z"/>

            <!-- places -->
            <g class="place-dot">
              <circle cx="1397" cy="502" r="2"/><circle cx="1562" cy="487" r="2"/><circle cx="1468" cy="536" r="2"/><circle cx="1382" cy="793" r="2"/><circle cx="1757" cy="863" r="2"/><circle cx="2408" cy="601" r="2"/><circle cx="2194" cy="175" r="2"/><circle cx="1468" cy="1031" r="2"/><circle cx="1831" cy="1131" r="2"/><circle cx="1529" cy="1389" r="2"/><circle cx="2416" cy="1210" r="2"/>
              <circle cx="1969" cy="740" r="3"/><circle cx="2278" cy="472" r="3"/><circle cx="1515" cy="1236" r="3"/><circle cx="2092" cy="1391" r="3"/>
            </g>
            <g class="place">
              <text x="1402" y="505">See</text><text x="1567" y="490">Unterlangenroth</text><text x="1473" y="539">Oberlangenroth</text><text x="1386" y="797">Reuth</text><text x="1762" y="866">Hegnabrunn</text><text x="2412" y="604">Sessenreuth</text><text x="2199" y="178">Neufang</text><text x="1367" y="1035">izendorf</text><text x="1473" y="1034">Feuln</text><text x="1835" y="1134">Schlömen</text><text x="1533" y="1392">Weiherhaus</text><text x="2420" y="1213">Schwärzhof</text>
              <text class="river-name" x="1443" y="1077">Weißer Main</text>
            </g>
            <g class="place big">
              <text x="1877" y="745">Neuenmarkt</text><text x="2284" y="477">Wirsberg</text><text x="1522" y="1240">Trebgast</text><text x="2098" y="1396">Himmelkron</text>
            </g>
            <g class="street">
              <text transform="translate(1857 651) rotate(68)">Schrenkweg</text>
              <text transform="translate(1635 797) rotate(61)">Hegnabrunn</text>
              <text transform="translate(1620 924) rotate(-17)">Hegnabrunn</text>
              <text transform="translate(1829 848) rotate(37)">Königsberger Straße</text>
              <text transform="translate(2247 374) rotate(82)">Kulmbacher Straße</text>
              <text transform="translate(2272 567) rotate(87)">Laubenweg</text>
              <text transform="translate(2288 706) rotate(-88)">Laubenweg</text>
              <text transform="translate(2001 721) rotate(-40)">Wirsberger Straße</text>
              <text transform="translate(2030 937) rotate(62)">Sailweg</text>
              <text transform="translate(1904 942) rotate(85)">Bayreuther Straße</text>
              <text transform="translate(1395 1209) rotate(-12)">Bergstraße</text>
              <text transform="translate(2235 1317) rotate(45)">Am Sportgelände</text>
              <text transform="translate(2342 1284) rotate(-9)">Schwärzhof</text>
              <text transform="translate(2367 1346) rotate(26)">Streit</text>
            </g>
            <g class="shield">
              <rect x="2094" y="486" width="30" height="16" rx="3"/><text x="2109" y="498">B303</text>
              <rect x="2270" y="745" width="30" height="16" rx="3"/><text x="2285" y="757">B303</text>
              <rect x="2281" y="972" width="30" height="16" rx="3"/><text x="2296" y="984">B303</text>
              <rect x="2289" y="1177" width="30" height="16" rx="3"/><text x="2304" y="1189">B303</text>
              <rect x="2219" y="1365" width="30" height="16" rx="3"/><text x="2234" y="1377">B303</text>
            </g>
            <g class="shield blue-shield"><rect x="2430" y="1362" width="39" height="15" rx="1"/><text x="2449" y="1374">A9/E51</text></g>

            <!-- tours -->
            <path class="tour-line" d="M2040 755L2077 790 2113 828 2150 860M1932 795L1968 830 2004 865"/>
            <g class="tag">
              <rect x="2000" y="773" width="80" height="16" rx="3"/><text x="2004" y="786">TB / 20 / -213</text>
              <rect x="2044" y="806" width="65" height="16" rx="3"/><text x="2048" y="819">T / [205, 1]</text>
              <rect x="2089" y="842" width="47" height="16" rx="3"/><text x="2092" y="855">[207, 4]</text>
              <rect x="2105" y="881" width="89" height="16" rx="3"/><text x="2109" y="894">TB / 89,5 / -211</text>
              <rect x="1909" y="810" width="46" height="16" rx="3"/><text x="1912" y="823">[207, 1]</text>
              <rect x="1926" y="846" width="83" height="16" rx="3"/><text x="1930" y="859">SB:2 / [207, 2]</text>
              <rect x="1961" y="883" width="84" height="16" rx="3"/><text x="1965" y="896">SB:2 / [207, 5]</text>
            </g>
            <path class="pin" d="M2077 779l11 20h-22zM2113 814l11 20h-22zM1932 782l11 20h-22zM1968 818l11 20h-22zM2004 854l11 20h-22z"/>
            <path class="pin order" d="M2040 740l13 26h-26zM2150 847l13 26h-26z"/>
          </svg>

          <div class="sale-info">
            <p>Verkäufer: Michael Ruckdeschel</p>
            <p>Verkaufsdatum: 08.06.23</p>
          </div>
          <div class="map-controls">
            <div class="zoom"><button type="button" class="btn">-</button><button type="button" class="btn">+</button></div>
            <label class="check"><input type="checkbox" checked>Aufträge</label>
            <label class="check"><input type="checkbox" checked>Touren</label>
            <label class="check"><input type="checkbox">TKWs</label>
            <label class="check"><input type="checkbox" checked>Preisanfragen</label>
            <label class="check"><input type="checkbox">Archiv</label>
          </div>
        </div>
        <div class="map-foot">
          <span class="scale"><i></i><i></i><i></i><i></i></span>
          <span>1000 m</span>
          <span class="spacer"></span>
          <span>(c) PTV / TomTom</span>
        </div>
      </section>
    </main>

    <footer class="statusbar">
      <span class="status">Tour: 207 Stopp: 3 TKW: KU XP 33 am: 23.11.23 16:18</span>
      <span class="status grip"></span>
    </footer>
  </div>
</body>
</html>
```

FILE: styles.css
```css
* {
  box-sizing: border-box;
  margin: 0;
  padding: 0;
}

body {
  height: 100vh;
  padding-bottom: 2px;
  background: #9a9a9a;
  color: #000;
  font-family: "Open Sans", "Noto Sans", sans-serif;
  font-size: 17px;
  line-height: 20px;
}

button, input, select, textarea {
  font: inherit;
  color: inherit;
}

.defs {
  position: absolute;
}

.spacer {
  flex: 1;
}

.window {
  height: 100%;
  display: flex;
  flex-direction: column;
  background: #fff;
  border: 2px solid #b0b0b0;
  border-radius: 10px;
  overflow: hidden;
}

/* title, menu, toolbar */
.titlebar {
  height: 43px;
  display: flex;
  align-items: center;
  gap: 6px;
  padding: 0 27px 2px 11px;
  background: linear-gradient(90deg, #eaf5f8, #eaf3fb 12%, #e9f5f8 30%);
}

.titlebar h1 {
  flex: 1;
  font-size: 16px;
  font-weight: 400;
}

.logo {
  width: 24px;
  height: 24px;
}

.window-buttons {
  display: flex;
  gap: 54px;
}

.window-buttons button {
  width: 16px;
  height: 16px;
  border: 0;
  background: none;
}

.window-buttons svg {
  display: block;
  width: 16px;
  height: 16px;
  fill: none;
  stroke: #111;
  stroke-width: 1.5;
}

.menubar {
  height: 30px;
  display: flex;
  align-items: center;
  gap: 20px;
  padding: 2px 11px 0;
  border-bottom: 2px solid #f0f0f0;
}

.menubar a {
  color: #000;
  text-decoration: none;
}

.menubar u {
  text-underline-offset: 3px;
}

.toolbar {
  height: 80px;
  display: flex;
  align-items: center;
  gap: 9px;
  padding: 0 9px;
  background: #4a4a4a;
}

.btn {
  display: inline-flex;
  align-items: center;
  justify-content: center;
  background: #f0f0f0;
  border: 2px solid;
  border-color: #fff #696969 #696969 #fff;
  font-weight: 600;
}

.btn svg {
  width: 18px;
  height: 18px;
  fill: currentColor;
}

.btn.gray {
  background: #e1e1e1;
}

.tool {
  width: 97px;
  height: 62px;
  flex-direction: column;
  gap: 10px;
  padding-top: 2px;
}

.tool svg.red {
  color: #c8102e;
}

/* layout */
.content {
  flex: 1;
  min-height: 0;
  display: flex;
  padding: 8px 9px 10px 10px;
}

.data-pane {
  flex: 1332 1 0;
  min-width: 0;
  display: flex;
  flex-direction: column;
  padding-top: 2px;
}

.splitter {
  width: 6px;
  margin: 0 9px 0 8px;
  background: #c41230;
}

.map-pane {
  flex: 1127 1 0;
  min-width: 0;
  display: flex;
  flex-direction: column;
  padding-top: 1px;
}

.tabs {
  display: flex;
  align-items: flex-end;
  height: 28px;
  padding-left: 2px;
}

.tab {
  height: 25px;
  padding: 0 6px;
  border: 0;
  border-right: 2px solid #808080;
  background: #f0f0f0;
  font-weight: 600;
}

.tab:first-child {
  border-right: 0;
}

.tab.active {
  height: 28px;
  padding: 0 8px;
  outline: 1px dotted #000;
  outline-offset: -3px;
}

.panel {
  flex: 1;
  min-height: 0;
  display: flex;
  flex-direction: column;
  padding: 13px 8px 6px;
  background: #f0f0f0;
  border-right: 2px solid #787878;
  border-bottom: 2px solid #696969;
}

.forms {
  display: grid;
  grid-template-columns: 1fr 1fr;
  gap: 10px;
  padding-right: 6px;
}

.group {
  min-width: 0;
  border: 1px solid #a0a0a0;
  padding: 0 11px 8px;
}

.group legend {
  padding: 0 3px;
  margin-left: -4px;
  font-size: 16px;
  font-weight: 700;
  line-height: 22px;
}

/* fields */
.field {
  display: flex;
  flex-direction: column;
  min-width: 0;
  flex: 1;
}

.field > label, .caption, .fill-text {
  font-weight: 600;
  white-space: nowrap;
}

.field.link label {
  color: #0000f0;
}

.field input[type="text"], .field textarea, .listbox {
  width: 100%;
  min-width: 0;
  height: 29px;
  padding: 0 1px;
  background: #fff;
  border: 2px solid;
  border-color: #787878 #f8f8f8 #f8f8f8 #787878;
  border-radius: 0;
  outline: 0;
  font-size: 16px;
}

.field input.center {
  text-align: center;
}

.field input.right {
  text-align: right;
  padding-right: 0;
}

.check {
  display: flex;
  align-items: center;
  gap: 8px;
  font-weight: 600;
  white-space: nowrap;
}

.check input {
  appearance: none;
  flex: none;
  width: 18px;
  height: 18px;
  background: #fff;
  border: 2px solid;
  border-color: #787878 #f8f8f8 #f8f8f8 #787878;
}

.check input:checked::before {
  content: "";
  display: block;
  width: 10px;
  height: 10px;
  margin: 1px 2px;
  background: #000;
  clip-path: polygon(0 40%, 35% 65%, 90% 0, 100% 20%, 40% 100%, 0 70%);
}

.focus-row {
  display: flex;
  height: 35px;
}

.focus-row .check {
  width: 264px;
  padding-top: 4px;
}

.btn-m {
  width: 25px;
  height: 25px;
}

.pair {
  display: grid;
  grid-template-columns: 1fr 1fr;
  gap: 24px;
  margin-bottom: 11px;
}

.with-button {
  display: flex;
  align-items: flex-end;
  gap: 12px;
}

.combos {
  margin-bottom: 12px;
}

.combos .with-button {
  gap: 9px;
}

.combo {
  position: relative;
  flex: 1;
  height: 40px;
  background: #fff;
  border: 2px solid;
  border-color: #787878 #f8f8f8 #f8f8f8 #787878;
}

.combo select {
  appearance: none;
  width: 100%;
  height: 100%;
  padding: 0 26px 0 1px;
  background: none;
  border: 0;
  font-size: 22px;
  font-weight: 600;
}

.combo.yellow {
  background: #ffff99;
}

.combo.yellow select {
  padding-left: 8px;
}

.arrow {
  position: absolute;
  top: 0;
  right: 0;
  width: 25px;
  height: 100%;
  display: flex;
  align-items: center;
  justify-content: center;
  background: #f0f0f0;
  border: 1px solid;
  border-color: #fff #696969 #696969 #fff;
  pointer-events: none;
}

.arrow svg {
  width: 14px;
  height: 8px;
}

.btn-add {
  width: 39px;
  height: 40px;
}

.color {
  width: 39px;
  height: 40px;
  background: #000;
  border: 1px solid #fff;
}

.btn-call {
  width: 37px;
  height: 31px;
}

.btn-call.off {
  color: #a0a0a0;
}

.tourtext {
  position: relative;
}

.field textarea {
  height: 108px;
  resize: none;
}

.vscroll {
  position: absolute;
  top: 22px;
  right: 2px;
  bottom: 2px;
  width: 25px;
  display: flex;
  flex-direction: column;
  align-items: center;
  justify-content: space-between;
  padding: 10px 0;
  background: #f0f0f0;
}

.vscroll svg {
  width: 12px;
  height: 9px;
  fill: #a0a0a0;
}

.fill-text {
  margin-top: 16px;
}

.fill-bar {
  height: 15px;
  background: #000;
}

.fill-bar span {
  display: block;
  height: 100%;
  background: #31a854;
}

.stopp {
  padding-top: 15px;
}

.row {
  display: grid;
  gap: 11px;
  margin-bottom: 11px;
}

.row-artikel { grid-template-columns: 61fr 157fr 385fr; }
.row-half { grid-template-columns: 301fr 313fr; }
.row-kunde { grid-template-columns: 61fr 229fr 313fr; }
.row-strasse { grid-template-columns: 1fr 37px; }
.row-ort { grid-template-columns: 61fr 553fr; }
.row-equal { grid-template-columns: 1fr 1fr; }
.row-tel { grid-template-columns: 301fr 265fr 37px; margin-bottom: 8px; }

.row-dates {
  margin-bottom: 35px;
}

.range {
  display: grid;
  align-items: start;
}

.range > span {
  text-align: center;
}

.range-date { grid-template-columns: 133fr 23px 145fr; }
.range-time { grid-template-columns: 61px 23px 61px 1fr; }

.range .check {
  padding: 3px 0 0 11px;
}

.btn-side {
  width: 37px;
  height: 37px;
  margin-top: 8px;
}

.btn-side.low {
  margin-top: 20px;
}

.listbox {
  height: 53px;
  overflow: hidden;
  padding: 0;
}

.listbox option {
  height: 25px;
  padding: 2px;
}

.listbox option:checked {
  background: linear-gradient(#0078d7, #0078d7);
  color: #fff;
}

.comm {
  display: grid;
  grid-template-columns: 134fr 191fr 131fr 96fr 73fr;
  height: 20px;
  font-size: 16px;
}

.actions {
  margin: 10px 0;
}

.actions > div {
  display: flex;
  gap: 9px;
}

.actions .btn {
  height: 40px;
  padding: 0 6px;
}

.actions .square {
  width: 41px;
}

.actions svg.small {
  width: 14px;
  height: 14px;
}

/* table */
.table-area {
  flex: 1;
  min-height: 0;
  overflow: hidden;
  background: #e0e0e0;
}

.stops {
  width: 100%;
  table-layout: fixed;
  border-collapse: separate;
  border-spacing: 0;
  border-bottom: 1px solid #000;
}

.c30 { width: 30px; }
.c41 { width: 41px; }
.c54 { width: 54px; }
.c68 { width: 68px; }
.c70 { width: 70px; }
.c80 { width: 80px; }
.c86 { width: 86px; }
.c89 { width: 89px; }
.c105 { width: 105px; }
.c110 { width: 110px; }
.c146 { width: 146px; }

.stops th, .stops td {
  position: relative;
  height: 28px;
  padding: 0 2px 0 3px;
  overflow: hidden;
  white-space: nowrap;
  text-align: left;
  font-weight: 400;
  line-height: 27px;
}

.stops th {
  background: #f0f0f0;
  border-right: 1px solid #000;
  border-bottom: 1px solid #000;
}

.stops thead th {
  border-top: 1px solid #fff;
  border-left: 1px solid #fff;
  padding-left: 2px;
  line-height: 26px;
}

.stops td {
  background: #fff;
  border-right: 1px solid #c0c0c0;
  border-bottom: 1px solid #c0c0c0;
}

.stops th:last-child, .stops td:last-child {
  border-right: 0;
}

.stops .cyan td { background: #b4f9fb; }
.stops .current td { background: #ffffbe; }
.stops .dim td { color: #808080; }
.stops .crimson { color: #c8102e; }
.stops .alert { background: #ff6a00; }
.stops .orange { color: #ff9422; }
.stops .blue { color: #0000ff; }

.stops .r, .stops .tour {
  text-align: right;
}

.stops .tour {
  font-weight: 700;
}

.stops .c {
  text-align: center;
  padding: 0;
}

.stops svg {
  width: 14px;
  height: 14px;
  vertical-align: -2px;
}

.stops .tour svg, .stops .sync, .stops i {
  float: left;
  margin-top: 7px;
}

.stops i {
  width: 12px;
  height: 12px;
  background: #31a854;
  border: 1px solid #000;
}

.hscroll {
  display: flex;
  height: 26px;
  background: #f7f7f7;
}

.hscroll .btn {
  width: 26px;
}

.hscroll svg {
  width: 8px;
  height: 14px;
}

/* amounts */
.bottom {
  display: flex;
  justify-content: space-between;
  padding-top: 9px;
}

.amounts {
  flex: 0 1 656px;
}

.amounts .caption {
  line-height: 26px;
}

.tree {
  height: 180px;
  padding: 2px 7px;
  list-style: none;
  background: #fff;
  border: 2px solid;
  border-color: #787878 #f8f8f8 #f8f8f8 #787878;
}

.tree li {
  display: flex;
  align-items: center;
  gap: 9px;
  line-height: 28px;
  font-weight: 600;
}

.node {
  width: 13px;
  height: 13px;
  border: 1px solid #808080;
  background: linear-gradient(#000, #000) center / 9px 1px no-repeat, linear-gradient(#000, #000) center / 1px 9px no-repeat;
}

.bottom-buttons {
  display: flex;
  align-items: flex-start;
  gap: 10px;
}

.bottom-buttons .btn {
  height: 40px;
}

.wide {
  width: 158px;
}

.reload {
  width: 49px;
}

/* map */
.map {
  position: relative;
  flex: 1;
  min-height: 0;
}

.map-svg {
  display: block;
  width: 100%;
  height: 100%;
}

.map-svg path {
  vector-effect: non-scaling-stroke;
}

.land { fill: #f8fbf8; }
.blank { fill: #fff; }
.town { fill: #ffece5; }
.town.warm { fill: #f9ece4; }
.water { fill: #8fbfe0; }
.forest { fill: url(#trees); }

.tree-ground { fill: #e0f4d8; }
.tree-mark { fill: none; stroke: #bfe0b8; stroke-width: 1; }
.tree-dot { fill: #c4e4bc; }

.river, .track, .road, .trunk, .res-case, .res-fill, .rail-case, .rail-fill, .sec-case, .sec-fill, .main-case, .main-fill, .a9-case, .a9-fill {
  fill: none;
  stroke-linejoin: round;
}

.river { stroke: #8fbfe0; stroke-width: 4; }
.track { stroke: #d3be98; stroke-width: 1; }
.road { stroke: #c0c0c0; stroke-width: 2; }
.trunk { stroke: #ff7474; stroke-width: 6; }
.res-case { stroke: #eae4ea; stroke-width: 4; }
.res-fill { stroke: #fff; stroke-width: 3; }
.rail-case { stroke: #bcbcbc; stroke-width: 4; }
.rail-fill { stroke: #fff; stroke-width: 1; stroke-dasharray: 2 2; }
.sec-case { stroke: #a0a0a0; stroke-width: 4; }
.sec-fill { stroke: #f4f020; stroke-width: 1.5; }
.main-case { stroke: #a0a0a0; stroke-width: 6; }
.main-fill { stroke: #ff0; stroke-width: 4; }
.a9-case { stroke: #ff7474; stroke-width: 14; }
.a9-fill { stroke: #ff0; stroke-width: 12; }

.frame { fill: url(#dots); fill-rule: evenodd; }

.place-dot circle {
  fill: #fff;
  stroke: #000;
}

.place, .street {
  font-family: "Liberation Sans", sans-serif;
  font-size: 11px;
  font-weight: 700;
  stroke: #fff;
  stroke-width: 3px;
  stroke-linejoin: round;
  paint-order: stroke;
}

.place.big { font-size: 15px; }
.street { font-size: 12px; font-weight: 400; }
.river-name { fill: #5d8fb5; }

.shield rect { fill: #ff0; stroke: #000; }

.shield text {
  font-family: "Liberation Sans", sans-serif;
  font-size: 11px;
  text-anchor: middle;
}

.blue-shield rect { fill: #0000f0; stroke: none; }
.blue-shield text { fill: #fff; }

.tour-line { fill: none; stroke: #000; stroke-width: 2; }
.tag { font-size: 12px; }
.tag rect { fill: #fff; stroke: #000; stroke-width: 1.5; }
.pin { fill: #ffa8a8; stroke: #b0a0a0; }
.pin.order { fill: #f00; stroke: #0a9ae0; stroke-width: 3; }

.sale-info {
  position: absolute;
  top: 0;
  left: 0;
  width: 66%;
  height: 194px;
  background: #fff;
  font-family: "DejaVu Sans Mono", monospace;
  font-size: 17px;
  line-height: 17px;
}

.sale-info p {
  margin-bottom: 17px;
}

.map-controls {
  position: absolute;
  top: 0;
  right: 0;
  width: 158px;
  height: 182px;
  padding-left: 12px;
  background: #fff;
}

.map-controls .check {
  height: 24px;
}

.zoom {
  display: flex;
  gap: 34px;
  margin-bottom: 12px;
}

.zoom .btn {
  width: 50px;
  height: 38px;
  background: #fff;
}

.map-foot {
  display: flex;
  align-items: center;
  gap: 12px;
  height: 14px;
  padding-left: 3px;
  font-family: "Liberation Sans", sans-serif;
  font-size: 10px;
  line-height: 14px;
}

.scale {
  display: flex;
  width: 188px;
  height: 6px;
  border: 1px solid #000;
}

.scale i {
  flex: 1;
  border-right: 1px solid #000;
}

.scale i:last-child { border-right: 0; }
.scale i:nth-child(odd) { background: #c0c0c0; }

/* status */
.statusbar {
  display: flex;
  height: 22px;
  gap: 3px;
  background: #f0f0f0;
}

.status {
  flex: 1;
  border-top: 1px solid #a0a0a0;
  border-right: 1px solid #fff;
  padding-right: 4px;
  text-align: right;
  font-size: 16px;
  font-weight: 600;
  line-height: 22px;
}

.status.grip {
  flex: 0 0 49px;
  border-left: 1px solid #a0a0a0;
}
```
